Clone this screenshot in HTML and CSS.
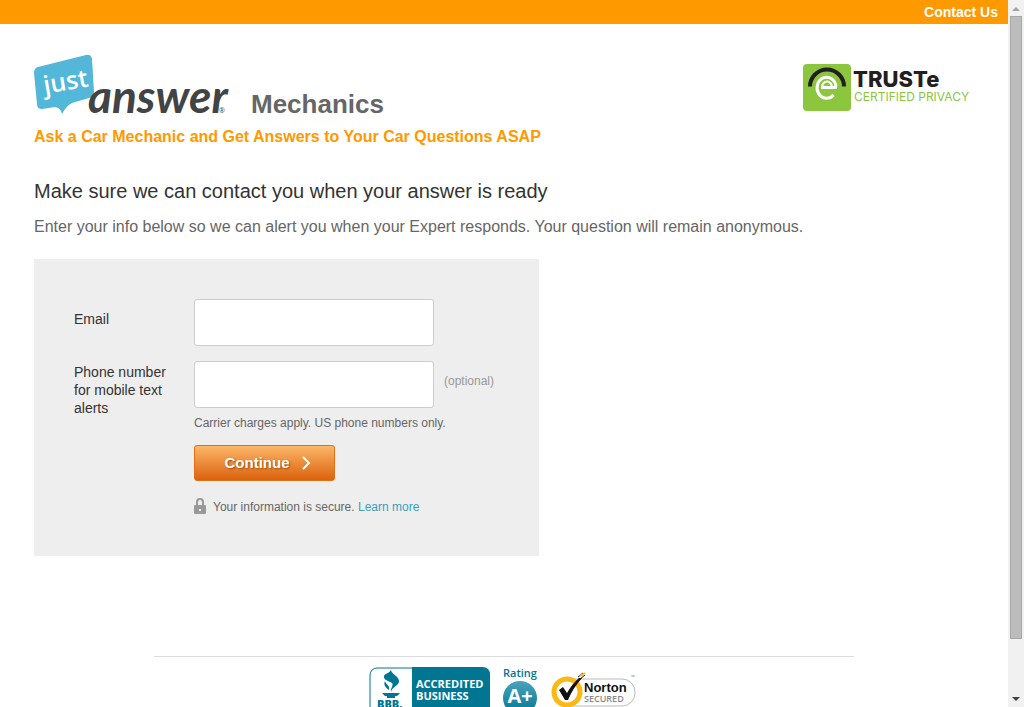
FILE: index.html
```html
<!DOCTYPE html>
<html lang="en">
<head>
<meta charset="utf-8">
<title>JustAnswer Mechanics</title>
<link rel="stylesheet" href="styles.css">
</head>
<body>
<div class="window">
  <div class="page">
    <nav class="topbar"><a href="#contact">Contact Us</a></nav>
    <div class="container">
      <header class="header">
        <div class="brand">
          <svg class="logo" width="198" height="64" viewBox="0 0 198 64" role="img" aria-label="JustAnswer">
            <path d="M4 13 L52 1 Q57 0 58 5 L60 38 Q60 43 55 44 L38 49 Q32 52 28 60 Q27 54 21 53 L8 55 Q3 55 3 50 L0 19 Q0 14 4 13Z" fill="#52b7d8"/>
            <text class="logo-just" x="11" y="40" transform="rotate(-10 11 40)">just</text>
            <text class="logo-answer" x="54" y="59">answer</text>
            <text class="logo-mark" x="185" y="59">®</text>
          </svg>
          <span class="category">Mechanics</span>
        </div>
        <svg class="truste" width="171" height="48" viewBox="0 0 171 48" role="img" aria-label="TRUSTe Certified Privacy">
          <rect width="48" height="47" rx="4" fill="#8cc63f"/>
          <path d="M7 22.500A17 17 0 0 1 41 22.500" fill="none" stroke="#231f20" stroke-width="4"/>
          <path d="M33 22.500A9.500 10.500 0 1 0 30.500 31" fill="none" stroke="#fff" stroke-width="3"/>
          <path d="M19 23.500A5 6 0 0 1 29 23.500" fill="none" stroke="#fff" stroke-width="2"/>
          <path d="M18 22H34V25H18Z" fill="#fff"/>
          <text class="truste-name" x="50" y="23">TRUSTe</text>
          <text class="truste-sub" x="51" y="37">CERTIFIED PRIVACY</text>
        </svg>
      </header>
      <p class="tagline">Ask a Car Mechanic and Get Answers to Your Car Questions ASAP</p>
      <main>
        <h1>Make sure we can contact you when your answer is ready</h1>
        <p class="intro">Enter your info below so we can alert you when your Expert responds. Your question will remain anonymous.</p>
        <form class="panel">
          <label class="email-label" for="email">Email</label>
          <input class="field" id="email" type="email">
          <label class="phone-label" for="phone">Phone number for mobile text alerts</label>
          <div class="phone">
            <div class="phone-row"><input class="field" id="phone" type="tel"><span class="optional">(optional)</span></div>
            <p class="note">Carrier charges apply. US phone numbers only.</p>
            <button class="continue" type="submit">Continue
              <svg width="9" height="14" viewBox="0 0 9 14" aria-hidden="true"><path d="M1 1L7 7L1 13" fill="none" stroke="#fff" stroke-width="2"/></svg>
            </button>
            <p class="secure">
              <svg width="12" height="16" viewBox="0 0 12 16" aria-hidden="true"><path d="M3 8V4Q3 1 6 1T9 4V8" fill="none" stroke="#999" stroke-width="2"/><rect y="7" width="12" height="9" rx="1" fill="#999"/><rect x="5" y="11" width="2" height="2" fill="#eee"/></svg>
              <span>Your information is secure. <a href="#learn">Learn more</a></span>
            </p>
          </div>
        </form>
      </main>
      <footer class="footer">
        <svg width="121" height="52" viewBox="0 0 121 52" role="img" aria-label="BBB Accredited Business">
          <rect x="1" y="1" width="119" height="50" rx="7" fill="#fff" stroke="#007692" stroke-width="1"/>
          <path d="M43 0H113Q121 0 121 8V52H43Z" fill="#007692"/>
          <path d="M22 2C21 7 31 9 30 15C29 19 23 20 22 25C21 22 25 18 23 16C20 14 14 13 15 9C16 6 22 6 22 2ZM16 14C17 18 21 18 20 23C17 21 14 18 16 14Z" fill="#007692"/>
          <path d="M13 26H31L28 29H16ZM18 29H26V31H18Z" fill="#007692"/>
          <text class="bbb" x="8" y="41">BBB.</text>
          <text class="bbb-text" x="47" y="21">ACCREDITED</text>
          <text class="bbb-text" x="47" y="33">BUSINESS</text>
        </svg>
        <svg width="38" height="52" viewBox="0 0 38 52" role="img" aria-label="Rating A+">
          <defs><linearGradient id="ball" x2="0" y2="1"><stop offset="0" stop-color="#4aa3bb"/><stop offset="1" stop-color="#007692"/></linearGradient></defs>
          <text class="rating" x="18" y="10">Rating</text>
          <circle cx="18" cy="31" r="17" fill="url(#ball)"/>
          <text class="grade" x="18" y="36">A+</text>
        </svg>
        <svg width="88" height="52" viewBox="0 0 88 52" role="img" aria-label="Norton Secured">
          <rect x="10" y="12" width="73" height="27" rx="13" fill="#fff" stroke="#bbb" stroke-width="1"/>
          <circle cx="15" cy="25" r="13" fill="#fff" stroke="#fdb913" stroke-width="5"/>
          <path d="M7 23L11 20L15 26Q20 17 27 11L30 11Q21 21 16 33H13Z" fill="#111"/>
          <path d="M26 10L31 6M28 12L33 8" stroke="#111" stroke-width="1"/><path d="M28 9L33 6" stroke="#fdb913" stroke-width="2"/>
          <text class="norton" x="32" y="25">Norton</text>
          <text class="secured" x="32" y="35">SECURED</text>
          <text class="tm" x="79" y="12">™</text>
        </svg>
      </footer>
    </div>
  </div>
  <div class="scrollbar" aria-hidden="true">
    <svg width="16" height="16"><path d="M4 11H12L8 7Z" fill="#a3a3a3"/></svg>
    <div class="track"><div class="thumb"></div></div>
    <svg width="16" height="16"><path d="M4 6H12L8 10Z" fill="#444"/></svg>
  </div>
</div>
</body>
</html>
```
FILE: styles.css
```css
* { box-sizing: border-box; }
body { margin: 0; font-family: "Liberation Sans", Arial, sans-serif; color: #333; background: #fff; }
p, h1 { margin: 0; }
a { text-decoration: none; }
svg { overflow: visible; }
.window { display: flex; height: 100vh; overflow: hidden; }
.page { flex: 1; min-width: 0; overflow: hidden; }
.topbar { background: #f90; padding: 0 10px; height: 24px; line-height: 24px; text-align: right; font-size: 14px; font-weight: bold; }
.topbar a { color: #fff; }
.container { max-width: 940px; margin: 0 auto; padding-top: 30px; }
.header { display: flex; justify-content: space-between; align-items: flex-start; }
.brand { display: flex; align-items: flex-end; gap: 19px; }
.category { font-size: 26px; line-height: 28px; font-weight: bold; color: #666; }
.logo, .truste { display: block; }
.truste { margin-top: 10px; }
.logo-just { font: 600 25px "Open Sans", sans-serif; fill: #fff; }
.logo-answer { font: italic 700 46px Lato, sans-serif; fill: #414344; }
.logo-mark { font: 7px "Open Sans", sans-serif; fill: #414344; }
.truste-name { font: 800 22px Inter, sans-serif; fill: #231f20; }
.truste-sub { font: 12px Inter, sans-serif; fill: #8cc63f; }
.tagline { margin-top: 9px; font-size: 16px; line-height: 20px; font-weight: bold; color: #f90; }
h1 { margin-top: 32px; font-size: 20px; line-height: 24px; font-weight: normal; }
.intro { margin-top: 14px; font-size: 16px; line-height: 20px; color: #666; }
.panel { display: grid; grid-template-columns: 100px 1fr; column-gap: 20px; row-gap: 15px; width: 505px; max-width: 100%; margin-top: 22px; padding: 40px 40px 39px; background: #eee; font-size: 14px; line-height: 18px; }
.email-label { padding-top: 11px; }
.phone-label { padding-top: 2px; }
.field { display: block; width: 240px; height: 47px; padding: 0 10px; border: 1px solid #ccc; border-radius: 3px; background: #fff; font: 16px "Liberation Sans", Arial, sans-serif; }
.phone-row { display: flex; gap: 10px; }
.optional { padding-top: 11px; font-size: 12px; color: #999; }
.note { margin-top: 6px; font-size: 12px; color: #666; }
.continue { display: flex; align-items: center; justify-content: center; gap: 12px; width: 141px; height: 36px; margin-top: 13px; padding: 0 0 1px 6px; border: 1px solid #e06f15; border-radius: 3px; background: linear-gradient(#fbb768, #db620e); color: #fff; font: bold 15px "Liberation Sans", Arial, sans-serif; text-shadow: 1px 1px 2px #a04a0a; }
.secure { display: flex; gap: 7px; margin-top: 17px; font-size: 12px; line-height: 19px; color: #666; }
.secure a { color: #39a0bf; }
.footer { display: flex; justify-content: center; align-items: flex-start; gap: 12px; max-width: 700px; margin: 100px auto 0; padding-top: 10px; border-top: 1px solid #ddd; }
.bbb { font: 800 11px "Open Sans", sans-serif; fill: #007692; }
.bbb-text { font: 700 11px "Open Sans", sans-serif; fill: #fff; }
.rating { font: 600 11px "Open Sans", sans-serif; fill: #007692; text-anchor: middle; }
.grade { font: 700 20px "Open Sans", sans-serif; fill: #fff; text-anchor: middle; }
.norton { font: 700 13px "Liberation Sans", sans-serif; fill: #111; }
.secured { font: 600 9px "Open Sans", sans-serif; fill: #888; }
.tm { font: 5px "Open Sans", sans-serif; fill: #777; }
.scrollbar { display: flex; flex-direction: column; width: 16px; background: #f1f1f1; }
.scrollbar svg { display: block; flex: none; }
.track { flex: 1; padding: 0 2px; display: grid; grid-template-rows: 12fr 1fr; }
.thumb { width: 12px; background: #bcbcbc; border: 1px solid #a8a8a8; }
```
